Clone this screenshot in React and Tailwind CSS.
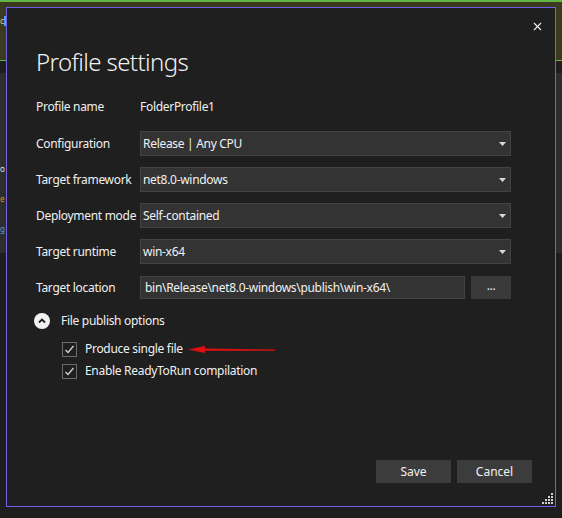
import { X } from 'lucide-react';

const rows = [
  { label: 'Configuration', value: 'Release | Any CPU', first: true },
  { label: 'Target framework', value: 'net8.0-windows' },
  { label: 'Deployment mode', value: 'Self-contained' },
  { label: 'Target runtime', value: 'win-x64' },
];

function Dropdown({ value }) {
  return (
    <div className="flex h-[25px] w-[371px] items-center justify-between border border-[#434343] bg-[#333333] pl-[2px] pr-[4px]">
      <span className="text-[#f1f1f1]">{value}</span>
      <svg width="7" height="4" viewBox="0 0 7 4" className="text-[#d8d8d8]">
        <path d="M0 0h7L3.5 4z" fill="currentColor" />
      </svg>
    </div>
  );
}

function Checkbox({ label }) {
  return (
    <div className="flex h-[16px] items-center gap-[8px]">
      <div className="flex h-[15px] w-[15px] items-center justify-center border border-[#6b6b6b]">
        <svg width="11" height="11" viewBox="0 0 11 11">
          <path d="M1.5 6l2.5 2.5L9.5 2" fill="none" stroke="#cfcfcf" strokeWidth="1.4" />
        </svg>
      </div>
      <span className="text-[#f1f1f1]">{label}</span>
    </div>
  );
}

export default function App() {
  return (
    <div
      className="relative h-[518px] w-[562px] overflow-hidden bg-[#1e1e1e]"
      style={{ fontFamily: '"Noto Sans", "Open Sans", sans-serif' }}
    >
      {/* underlying IDE window */}
      <div className="flex h-[60px] items-start border-t-2 border-[#62b544] bg-[#3b3a1f] pt-[13px] text-[9px] leading-[12px]">
        <span className="text-[#f0c070]">c</span>
        <span className="mt-[1px] h-[10px] w-[2px] bg-[#4aa3ff]" />
      </div>
      <div className="h-px bg-[#62b544]" />
      <div className="h-[12px] bg-[#1e1e1e]" />
      <div className="flex h-[180px] flex-col gap-[18px] bg-[#2d2d2d] pt-[90px] text-[8px] leading-[12px]">
        <span className="text-[#e6e6e6]">o</span>
        <span className="text-[#e8892f]">e</span>
        <span className="text-[#4fa8d8]">g</span>
      </div>

      {/* dialog */}
      <div className="absolute left-[6px] top-[7px] flex h-[500px] w-[550px] flex-col border border-[#7160e8] bg-[#1f1f1f] pl-[29px] pr-[23px] pb-[23px] text-[12px] tracking-[-0.3px] text-[#f1f1f1]">
        <div className="-mr-[12px] flex h-[36px] items-center justify-end">
          <X size={13} strokeWidth={2} className="text-[#f1f1f1]" />
        </div>
        <div className="h-[36px] text-[24px] font-light leading-[36px] tracking-[-0.6px] text-[#f1f1f1]">
          Profile settings
        </div>

        <div className="mt-[17px] flex h-[20px] items-center">
          <span className="w-[104px]">Profile name</span>
          <span>FolderProfile1</span>
        </div>

        {rows.map((r) => (
          <div
            key={r.label}
            className={`flex items-center ${r.first ? 'mt-[14px]' : 'mt-[11px]'}`}
          >
            <span className="w-[104px] shrink-0 whitespace-nowrap">{r.label}</span>
            <Dropdown value={r.value} />
          </div>
        ))}

        <div className="mt-[12px] flex items-center">
          <span className="w-[104px] shrink-0">Target location</span>
          <div className="flex h-[23px] w-[325px] items-center border border-[#434343] bg-[#333333] pl-[4px]">
            bin\Release\net8.0-windows\publish\win-x64\
          </div>
          <div className="ml-[6px] flex h-[23px] w-[40px] items-center justify-center bg-[#3a3a3a] pb-[3px]">
            ...
          </div>
        </div>

        <div className="mt-[13px] flex h-[18px] items-center gap-[11px]">
          <div className="ml-[-2px] flex h-[16px] w-[16px] items-center justify-center rounded-full bg-[#f1f1f1]">
            <svg width="8" height="6" viewBox="0 0 8 6">
              <path d="M1 4.5L4 1.5L7 4.5" fill="none" stroke="#1f1f1f" strokeWidth="1.8" />
            </svg>
          </div>
          <span>File publish options</span>
        </div>

        <div className="mt-[11px] flex flex-col gap-[6px] pl-[26px]">
          <Checkbox label="Produce single file" />
          <Checkbox label="Enable ReadyToRun compilation" />
        </div>

        <div className="mt-auto flex justify-end gap-[6px] tracking-normal">
          <button className="flex h-[23px] w-[75px] items-center justify-center bg-[#3c3c3c] text-[#f1f1f1]">
            Save
          </button>
          <button className="flex h-[23px] w-[75px] items-center justify-center bg-[#3c3c3c] text-[#f1f1f1]">
            Cancel
          </button>
        </div>

        {/* resize grip */}
        <svg width="12" height="12" viewBox="0 0 12 12" className="absolute bottom-[1px] right-[1px]">
          {[
            [9, 0], [6, 3], [9, 3], [3, 6], [6, 6], [9, 6], [0, 9], [3, 9], [6, 9], [9, 9],
          ].map(([x, y]) => (
            <rect key={`${x}-${y}`} x={x} y={y} width="2" height="2" fill="#d0d0d0" />
          ))}
        </svg>
      </div>

      {/* red annotation arrow */}
      <svg width="92" height="12" viewBox="0 0 92 12" className="absolute left-[186px] top-[343px]">
        <path d="M17 5.6L89 6.6L89 7.8L17 7.8z" fill="#e01010" />
        <path d="M2 6.5L19 3L19 10z" fill="#e01010" />
      </svg>
    </div>
  );
}
